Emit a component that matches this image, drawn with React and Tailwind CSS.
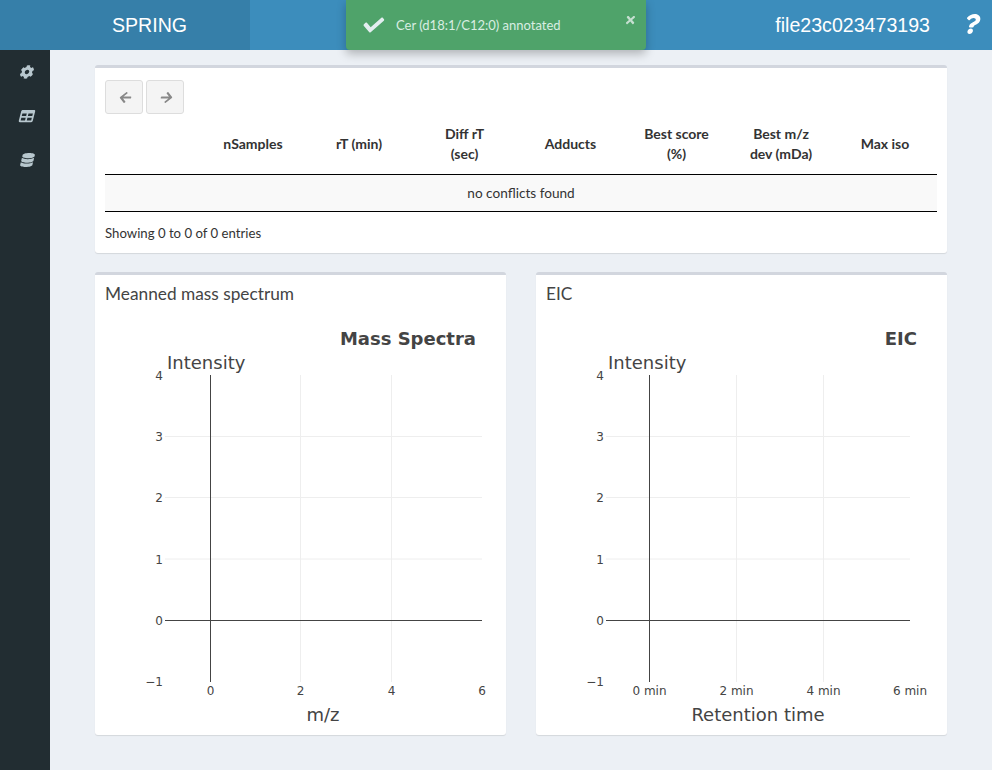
import React from 'react';
import { FaCog, FaTable, FaDatabase, FaArrowLeft, FaArrowRight, FaCheck, FaTimes, FaQuestion } from 'react-icons/fa';

const columns = [
  { label: 'nSamples' },
  { label: 'rT (min)' },
  { label: 'Diff rT', sub: '(sec)' },
  { label: 'Adducts' },
  { label: 'Best score', sub: '(%)' },
  { label: 'Best m/z', sub: 'dev (mDa)' },
  { label: 'Max iso' },
];

const yTicks = [
  { label: '4', y: 65 },
  { label: '3', y: 126.5 },
  { label: '2', y: 187.5 },
  { label: '1', y: 249 },
  { label: '0', y: 310.5 },
  { label: '−1', y: 371.5 },
];

function Chart({ title, titleEnd, xLabel, xLabelAt, left, right, xTicks }) {
  return (
    <svg width="411" height="420" className="block font-['DejaVu_Sans',sans-serif]">
      {/* grid only between the outer ticks */}
      {yTicks.slice(1, 4).map((t) => (
        <line key={t.label} x1={left} x2={right} y1={t.y} y2={t.y} stroke="#eeeeee" />
      ))}
      {xTicks.slice(1, 3).map((t) => (
        <line key={t.label} x1={t.x} x2={t.x} y1="65" y2="372" stroke="#eeeeee" />
      ))}
      <line x1={left} x2={right} y1="310.5" y2="310.5" stroke="#444444" />
      <line x1={xTicks[0].x} x2={xTicks[0].x} y1="65" y2="372" stroke="#444444" />
      {yTicks.map((t) => (
        <text key={t.label} x="68" y={t.y + 4.5} textAnchor="end" fontSize="12" fill="#444444">{t.label}</text>
      ))}
      {xTicks.map((t) => (
        <text key={t.label} x={t.x} y="385" textAnchor="middle" fontSize="12" fill="#444444">{t.label}</text>
      ))}
      <text x={titleEnd} y="35" textAnchor="end" fontSize="18" fontWeight="700" fill="#444444">{title}</text>
      <text x="72" y="59" fontSize="18" fill="#444444">Intensity</text>
      <text x={xLabelAt} y="411" textAnchor="middle" fontSize="18" fill="#444444">{xLabel}</text>
    </svg>
  );
}

function ChartBox({ heading, ...chart }) {
  return (
    <div className="w-[411px] h-[463px] bg-white border-t-[3px] border-[#d2d6de] rounded-[3px] shadow-[0_1px_1px_rgba(0,0,0,0.1)]">
      <div className="h-[35px] pl-[10px] pt-[8px] text-[17.3px] leading-[22px] text-[#444]">{heading}</div>
      <Chart {...chart} />
    </div>
  );
}

export default function App() {
  return (
    <div className="relative w-[992px] h-[770px] overflow-hidden flex flex-col bg-[#ecf0f5] font-['Lato',sans-serif] text-[#333]">
      {/* Header */}
      <header className="h-[50px] shrink-0 flex bg-[#3c8dbc] text-white font-['Liberation_Sans',sans-serif]">
        <div className="w-[250px] flex items-center justify-center bg-[#367fa9] text-[19.6px] pl-[49px] pt-[1px]">SPRING</div>
        <div className="flex-1 flex items-center justify-end">
          <span className="text-[19.6px] mr-[34px] pt-[1px]">file23c023473193</span>
          <FaQuestion className="w-[16px] h-[20px] mr-[12px] mb-[3px] -skew-x-[14deg]" />
        </div>
      </header>

      <div className="flex-1 flex min-h-0">
        {/* Sidebar */}
        <nav className="w-[50px] shrink-0 bg-[#222d32] flex flex-col items-center pt-[15px] pl-[4px] gap-[30px] text-[#b8c7ce]">
          <FaCog className="w-[14px] h-[14px] -skew-x-[14deg]" />
          <FaTable className="w-[16px] h-[14px] -skew-x-[14deg]" />
          <FaDatabase className="w-[15px] h-[14px] -skew-x-[14deg]" />
        </nav>

        {/* Content */}
        <main className="flex-1 pt-[15px] pl-[45px] pr-[45px] flex flex-col gap-[19px]">
          <section className="w-[852px] h-[188px] bg-white border-t-[3px] border-[#d2d6de] rounded-[3px] shadow-[0_1px_1px_rgba(0,0,0,0.1)] px-[10px] pt-[12px]">
            <div className="flex gap-[3px]">
              <button className="w-[38px] h-[34px] pl-[3px] flex items-center justify-center bg-[#f4f4f4] border border-[#dddddd] rounded-[3px] text-[#888]">
                <FaArrowLeft className="w-[13px] h-[13px] -skew-x-[14deg]" />
              </button>
              <button className="w-[38px] h-[34px] pl-[3px] flex items-center justify-center bg-[#f4f4f4] border border-[#dddddd] rounded-[3px] text-[#888]">
                <FaArrowRight className="w-[13px] h-[13px] -skew-x-[14deg]" />
              </button>
            </div>
            <table className="w-[832px] table-fixed border-collapse text-[13.6px]">
              <colgroup>
                <col className="w-[95px]" />
                <col className="w-[106px]" />
                <col className="w-[106px]" />
                <col className="w-[105px]" />
                <col className="w-[107px]" />
                <col className="w-[105px]" />
                <col className="w-[104px]" />
                <col className="w-[104px]" />
              </colgroup>
              <thead>
                <tr className="h-[60px] border-b border-black">
                  <th></th>
                  {columns.map((c) => (
                    <th key={c.label} className="font-bold text-[14px] leading-[20px] text-center align-middle">
                      {c.label}
                      {c.sub && <div>{c.sub}</div>}
                    </th>
                  ))}
                </tr>
              </thead>
              <tbody>
                <tr className="h-[37px] bg-[#f9f9f9] border-b border-black">
                  <td colSpan={8} className="text-center pt-[1px]">no conflicts found</td>
                </tr>
              </tbody>
            </table>
            <div className="mt-[12px] text-[13.2px] leading-[18px]">Showing 0 to 0 of 0 entries</div>
          </section>

          <div className="flex gap-[30px]">
            <ChartBox
              heading="Meanned mass spectrum"
              title="Mass Spectra"
              titleEnd={381}
              xLabel="m/z"
              xLabelAt={228}
              left={70}
              right={387}
              xTicks={[
                { label: '0', x: 115.5 },
                { label: '2', x: 205.5 },
                { label: '4', x: 296.5 },
                { label: '6', x: 387 },
              ]}
            />
            <ChartBox
              heading="EIC"
              title="EIC"
              titleEnd={381}
              xLabel="Retention time"
              xLabelAt={222}
              left={70}
              right={374}
              xTicks={[
                { label: '0 min', x: 113.5 },
                { label: '2 min', x: 200.5 },
                { label: '4 min', x: 287.5 },
                { label: '6 min', x: 374 },
              ]}
            />
          </div>
        </main>
      </div>

      {/* Toast */}
      <div className="absolute left-[346px] top-0 w-[300px] h-[50px] flex items-center bg-[#4fa36a] rounded-b-[4px] shadow-[0_4px_10px_rgba(0,0,0,0.25)] text-[#d9eee2] text-[13px]">
        <FaCheck className="ml-[15px] w-[25px] h-[20px] text-[#e3eef0] -skew-x-[8deg]" />
        <span className="ml-[10px] pt-[2px]">Cer (d18:1/C12:0) annotated</span>
        <FaTimes className="absolute right-[10px] top-[14px] w-[11px] h-[12px] text-[#c5dfd0] -skew-x-[8deg]" />
      </div>
    </div>
  );
}
